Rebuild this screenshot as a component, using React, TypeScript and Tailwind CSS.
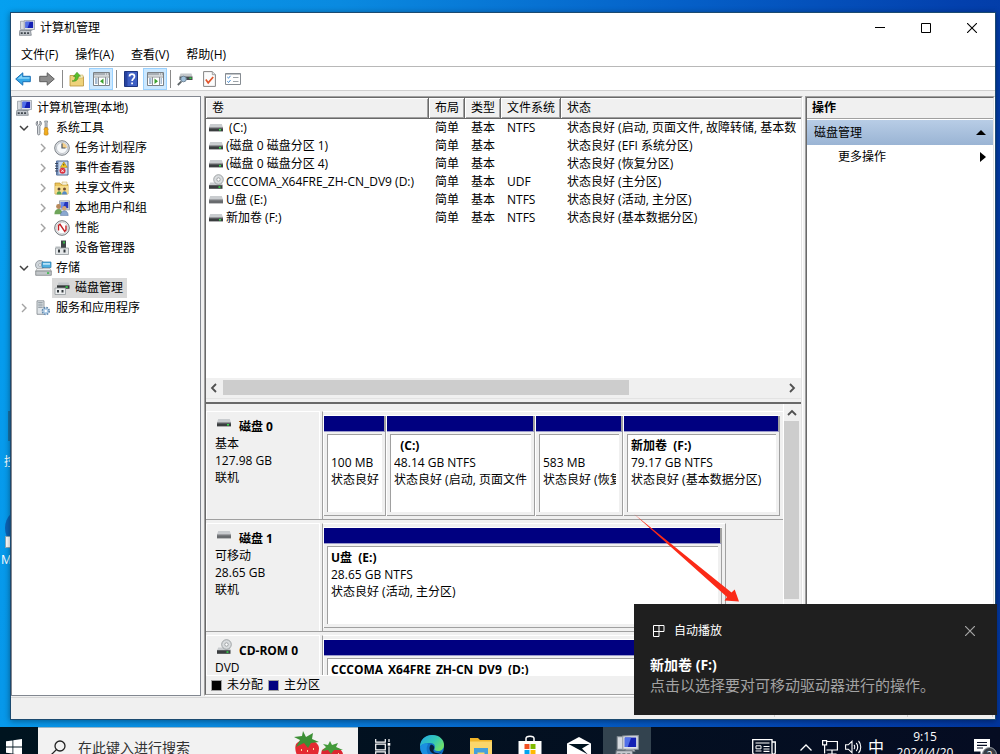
import type { ReactNode } from "react";

type IconProps = { className?: string };

const svgBase = "block shrink-0";

function ComputerIcon({ className = "size-4" }: IconProps) {
  return (
    <svg viewBox="0 0 16 16" className={`${svgBase} ${className}`}>
      <path d="M1.500 1.200h4.200v8.300H1.500z" fill="#d7dbe0" stroke="#8b929a" strokeWidth=".7" />
      <path d="M5.200.600l10.300-.2v9.100H5.200z" fill="#dfe3e8" stroke="#8e959d" strokeWidth=".7" />
      <path d="M6.500 1.700h7.600v6.300H6.500z" fill="#1420b4" />
      <path d="M6.500 1.700h4.300l-2.300 6.300h-2z" fill="#4f6fe8" />
      <path d="M7.500 9.500h5l1.200 1.500H6.500z" fill="#a9afb6" />
      <path d="M.8 10.500h10.700l.8 4.800H.3z" fill="#c4c9cf" stroke="#6f767e" strokeWidth=".7" />
      <path d="M1.700 12.300h2v1.600h-2zM4.900 12.300h2v1.600h-2zM8.100 12.300h2v1.600h-2z" fill="#3d444b" />
    </svg>
  );
}

function DriveIcon({ led = true, className = "" }: { led?: boolean; className?: string }) {
  return (
    <svg viewBox="0 0 14 8" className={`${svgBase} h-2 w-3.5 ${className}`}>
      <path d="M1.200 0h11.600L14 3.600H0z" fill="#c9cccf" />
      <path d="M0 3.500h14V7.400H0z" fill={led ? "#3a3d3f" : "#686b6e"} />
      <path d="M0 3.500h14v.8H0z" fill="#9a9da0" />
      {led && <path d="M10 4.900h2v1.600h-2z" fill="#35e04a" />}
    </svg>
  );
}

function DiscDriveIcon() {
  return (
    <svg viewBox="0 0 15 16" className={`${svgBase} h-4 w-[15px]`}>
      <path d="M1.200 8.500h11.600l1.200 3H0z" fill="#c9cccf" />
      <circle cx="9.500" cy="5.500" r="4.800" fill="#d9dcde" stroke="#8e9396" strokeWidth=".8" />
      <circle cx="9.500" cy="5.500" r="1.700" fill="#fff" stroke="#8e9396" strokeWidth=".8" />
      <path d="M0 11.200h13.500v3.600H0z" fill="#3a3d3f" />
      <path d="M9.500 12.300h2v1.500h-2z" fill="#35e04a" />
    </svg>
  );
}

function ToolsIcon() {
  return (
    <svg viewBox="0 0 16 16" className={`${svgBase} size-4`}>
      <path d="M2.500 1v3.200l1.200 1 1.200-1V1c1.500.7 2 2.800.9 4.300l-.9.9v7.600c0 1.500-2.400 1.500-2.400 0V6.200C.6 5 .8 2 2.500 1z" fill="#d5d9dd" stroke="#6d747b" strokeWidth=".8" />
      <path d="M9.600 1h3l-.5 2.500v4.200h-2V3.500z" fill="#c3c8cd" stroke="#777e85" strokeWidth=".7" />
      <path d="M9.600 7.700h3l.6 2-.5 1 .5 3.600c-.7 1.200-3.500 1.200-4.200 0l.6-3.600-.6-1z" fill="#f2ad1c" stroke="#b27710" strokeWidth=".6" />
    </svg>
  );
}

function ClockIcon() {
  return (
    <svg viewBox="0 0 16 16" className={`${svgBase} size-4`}>
      <circle cx="8" cy="8" r="7.300" fill="#dfe3e7" stroke="#7c8187" />
      <circle cx="8" cy="8" r="5.500" fill="#f7f9fb" stroke="#a7adb3" strokeWidth=".6" />
      <path d="M8 8V2.800A5.200 5.200 0 0 1 13 8z" fill="#f4cf8a" />
      <path d="M8 3.500V8h3.500" fill="none" stroke="#4d555d" strokeWidth="1.200" />
    </svg>
  );
}

function EventIcon() {
  return (
    <svg viewBox="0 0 16 16" className={`${svgBase} size-4`}>
      <path d="M2.500 1h11.500v14H2.500z" fill="#c9d9ee" stroke="#4d6690" />
      <path d="M2.500 1h2v14h-2z" fill="#6d89b5" />
      <path d="M1 3.500h3M1 6h3M1 8.500h3M1 11h3" stroke="#333f55" strokeWidth=".9" />
      <path d="M9.800 2l3.400 5.300H6.500z" fill="#ffd21e" stroke="#a67b00" strokeWidth=".6" />
      <path d="M9.800 3.800v1.800" stroke="#333" />
      <circle cx="8.500" cy="10.800" r="3" fill="#dc3340" />
      <path d="M7.300 9.600l2.400 2.400m0-2.400l-2.400 2.400" stroke="#fff" strokeWidth=".9" />
    </svg>
  );
}

function SharedFolderIcon() {
  return (
    <svg viewBox="0 0 16 16" className={`${svgBase} size-4`}>
      <path d="M1 3h5l1 1.500h7V14H1z" fill="#eac45c" stroke="#b98e27" strokeWidth=".7" />
      <path d="M8 2h5v3H8z" fill="#f5f0dc" stroke="#c6a548" strokeWidth=".5" />
      <path d="M1.200 6h13v7.800H1.200z" fill="#f6dc8c" />
      <circle cx="5" cy="9" r="1.500" fill="#5a4735" />
      <path d="M2.600 14.500c0-4.500 5-4.500 5 0z" fill="#57a054" />
      <circle cx="10.500" cy="9" r="1.500" fill="#745132" />
      <path d="M8 14.500c0-4.500 5-4.500 5 0z" fill="#5389c7" />
    </svg>
  );
}

function UsersIcon() {
  return (
    <svg viewBox="0 0 16 16" className={`${svgBase} size-4`}>
      <path d="M5.500.8h10v9h-10z" fill="#d8dce2" stroke="#888f98" strokeWidth=".7" />
      <path d="M6.800 2h7.500v6.200H6.800z" fill="#2638bd" />
      <path d="M6.800 2h4l-2 6.200h-2z" fill="#6a88e8" />
      <circle cx="4.500" cy="6.500" r="2.400" fill="#b98a5c" />
      <path d="M.4 14.200c0-6.800 8-6.800 8 0z" fill="#6fa55a" />
      <circle cx="10.300" cy="8.300" r="2.200" fill="#d3a878" />
      <path d="M6.500 15.600c0-6.500 7.700-6.500 7.700 0z" fill="#8aa8d0" stroke="#506f9c" strokeWidth=".5" />
    </svg>
  );
}

function PerformanceIcon() {
  return (
    <svg viewBox="0 0 16 16" className={`${svgBase} size-4`}>
      <circle cx="8" cy="8" r="7.300" fill="#f0f1f2" stroke="#6d7277" />
      <circle cx="8" cy="8" r="5.700" fill="#fff" stroke="#b9bdc1" strokeWidth=".6" />
      <path d="M4.500 10.500V5.300l1.500-1 4.700 7 1.300-1.300V5.500" fill="none" stroke="#c22026" strokeWidth="1.400" />
    </svg>
  );
}

function DeviceIcon() {
  return (
    <svg viewBox="0 0 16 16" className={`${svgBase} size-4`}>
      <path d="M7 .5h5V9H7z" fill="#3f4447" />
      <path d="M9 1.500h2v2H9z" fill="#38b54a" />
      <path d="M1.500 8h13v6.500h-13z" fill="#e3e6e8" stroke="#92979b" strokeWidth=".8" />
      <path d="M1.500 6.500h5V8h-5z" fill="#b5babd" />
      <path d="M4 9.500h2v3H4zM9.500 9.500h2v3h-2z" fill="#343a3e" />
    </svg>
  );
}

function StorageIcon() {
  return (
    <svg viewBox="0 0 17 16" className={`${svgBase} h-4 w-[17px]`}>
      <circle cx="5" cy="5" r="4.500" fill="#cfd5da" stroke="#878e95" strokeWidth=".8" />
      <circle cx="5" cy="5" r="1.400" fill="#fff" stroke="#878e95" strokeWidth=".6" />
      <path d="M7 2h9v5.500H7z" fill="#4fb0e0" stroke="#2877a8" strokeWidth=".7" />
      <path d="M8 3h7v1.800H8z" fill="#b7e2f7" />
      <path d="M2 8.500h13l1.300 2.500H.7z" fill="#e9ebed" stroke="#999" strokeWidth=".5" />
      <path d="M.7 11h15.600v4.300H.7z" fill="#c2c6c9" stroke="#73787c" strokeWidth=".7" />
      <path d="M12 12.300h2.200v1.500H12z" fill="#30b843" />
    </svg>
  );
}

function DiskManagementIcon() {
  return (
    <svg viewBox="0 0 16 16" className={`${svgBase} size-4`}>
      <path d="M4.500 2.500h10l1 3h-12z" fill="#c3c7ca" />
      <path d="M3 5.300h12.500v3.500H3z" fill="#34383a" />
      <path d="M11.500 6.300h2.300v1.500h-2.300z" fill="#35e04a" />
      <path d="M1 8h10.500v6.500H1z" fill="#eceeef" stroke="#92979b" strokeWidth=".8" />
      <path d="M3 10h2v2.500H3zM7.500 10h2v2.500h-2z" fill="#343a3e" />
    </svg>
  );
}

function ServicesIcon() {
  return (
    <svg viewBox="0 0 16 16" className={`${svgBase} size-4`}>
      <path d="M2 .8h7v13.500H2z" fill="#dfe4e8" stroke="#7d858c" strokeWidth=".8" />
      <path d="M3.200 2.800h4.500M3.200 5h4.500M3.200 7.200h4.500" stroke="#7e8991" />
      <circle cx="10.800" cy="11" r="3.300" fill="#cfe0f0" stroke="#5e86ad" strokeWidth="1.800" strokeDasharray="1.600 1" />
      <circle cx="10.800" cy="11" r="2.600" fill="#a9c8e4" />
      <circle cx="10.800" cy="11" r="1.200" fill="#fff" />
    </svg>
  );
}

function ArrowIcon({ forward = false }: { forward?: boolean }) {
  return (
    <svg viewBox="0 0 16 14" className={`${svgBase} h-3.5 w-4`}>
      {forward ? (
        <path d="M.7 4.300h7.500V.8L15.300 7l-7.100 6.200V9.700H.7z" fill="#8d8d8d" stroke="#5f5f5f" />
      ) : (
        <>
          <path d="M15.300 4.300H7.800V.8L.7 7l7.100 6.200V9.700h7.500z" fill="#36a8e8" stroke="#1b6fb4" />
          <path d="M14.500 5.300H7V2.700L2.500 6.700h12z" fill="#8ad4f8" />
        </>
      )}
    </svg>
  );
}

function UpFolderIcon() {
  return (
    <svg viewBox="0 0 16 16" className={`${svgBase} size-4`}>
      <path d="M1 4.500h5l1 1.300h7.500V15H1z" fill="#eed27b" stroke="#b8923a" strokeWidth=".8" />
      <path d="M9.500 4h4.500v3H9.500z" fill="#f8efcb" stroke="#c6a548" strokeWidth=".5" />
      <path d="M3 10c2.500 0 3.300-2 3.300-4.500H4.500L8 1.200l3.500 4H9.300c0 3.500-2.200 5.800-6.300 4.800z" fill="#59c12c" stroke="#318213" strokeWidth=".5" />
    </svg>
  );
}

function PaneIcon({ right = false }: { right?: boolean }) {
  return (
    <svg viewBox="0 0 17 14" className={`${svgBase} h-3.5 w-[17px]`}>
      <path d="M.5.500h16v13H.5z" fill="#fff" stroke="#7b8085" />
      <path d="M1 1h15v2.500H1z" fill="#a9afb5" />
      <path d="M12 1.500h1v1h-1zM14 1.500h1v1h-1z" fill="#fff" />
      <path d="M1 5h15" stroke="#8d9296" />
      <path d="M5.500 5v8.500M12.500 5v8.500" stroke="#8d9296" />
      <path d="M2 7h2.500M2 9h2.500M2 11h2.500M13.500 7H15M13.500 9H15M13.500 11H15" stroke="#527aa5" />
      {right ? <path d="M7.500 6.500v5.500l3.500-2.700z" fill="#3aa12e" /> : <path d="M10.500 6.500v5.500L7 9.300z" fill="#3aa12e" />}
    </svg>
  );
}

function HelpIcon() {
  return (
    <svg viewBox="0 0 14 16" className={`${svgBase} h-4 w-3.5`}>
      <path d="M.5.500h13v15H.5z" fill="#3e5fc4" stroke="#1e3580" />
      <path d="M1 1h2.500v14H1z" fill="#2743a0" />
      <path d="M5.500 5.500c0-3.200 5-3.200 5 0 0 2.200-2.400 2-2.400 4.500" fill="none" stroke="#fff" strokeWidth="1.700" />
      <path d="M7.200 11.500H9v1.800H7.200z" fill="#fff" />
    </svg>
  );
}

function ScanDriveIcon() {
  return (
    <svg viewBox="0 0 16 14" className={`${svgBase} h-3.5 w-4`}>
      <path d="M3.500 1.500h11l1 3h-13z" fill="#c4c8cb" />
      <path d="M2.500 4.500h13V8h-13z" fill="#44484a" />
      <path d="M12.500 5.500h2V7h-2z" fill="#30d544" />
      <path d="M4.500 9.300L.8 13" stroke="#5d6468" strokeWidth="1.800" />
      <circle cx="6.500" cy="7" r="2.800" fill="#9fc0da" stroke="#6f8496" />
    </svg>
  );
}

function CheckDocIcon() {
  return (
    <svg viewBox="0 0 13 16" className={`${svgBase} h-4 w-[13px]`}>
      <path d="M.6.600h8.700l3.100 3.100v11.700H.6z" fill="#fcfcfc" stroke="#858585" />
      <path d="M9.300.6v3.100h3.100" fill="#e2e2e2" stroke="#858585" strokeWidth=".7" />
      <path d="M2.800 8.600l2.400 3.200 5-5.800" fill="none" stroke="#e0552b" strokeWidth="1.700" />
    </svg>
  );
}

function ListIcon() {
  return (
    <svg viewBox="0 0 16 12" className={`${svgBase} h-3 w-4`}>
      <path d="M.5.500h15v11H.5z" fill="#fff" stroke="#868c92" />
      <path d="M.5 1h15" stroke="#868c92" />
      <path d="M2.300 4l1.200 1.200 2-2.400M2.300 8.300l1.200 1.200 2-2.400" fill="none" stroke="#3e87d0" />
      <path d="M8 4.500h5.500M8 8.500h5.500" stroke="#9da3a8" />
    </svg>
  );
}

function Chevron({ open = false }: { open?: boolean }) {
  return (
    <svg viewBox="0 0 10 10" className={`${svgBase} size-2.5`}>
      {open ? (
        <path d="M1 3l4 4 4-4" fill="none" stroke="#404040" strokeWidth="1.500" />
      ) : (
        <path d="M3 1l4 4-4 4" fill="none" stroke="#a2a2a2" strokeWidth="1.400" />
      )}
    </svg>
  );
}

function ScrollChevron({ d }: { d: string }) {
  return (
    <svg viewBox="0 0 10 10" className={`${svgBase} size-2.5`}>
      <path d={d} fill="none" stroke="#505050" strokeWidth="1.800" />
    </svg>
  );
}

/* ---------- window chrome ---------- */

function TitleBar() {
  return (
    <header className="flex h-[30px] shrink-0 items-center bg-white pl-2">
      <ComputerIcon />
      <h1 className="ml-[5px] flex-1 text-[12px] leading-4">计算机管理</h1>
      <button aria-label="最小化" className="grid h-full w-[46px] place-items-center">
        <svg viewBox="0 0 10 10" className="size-2.5"><path d="M0 4.500h10" stroke="#000" /></svg>
      </button>
      <button aria-label="最大化" className="grid h-full w-[46px] place-items-center">
        <svg viewBox="0 0 10 10" className="size-2.5"><path d="M.5.500h9v9h-9z" fill="none" stroke="#000" /></svg>
      </button>
      <button aria-label="关闭" className="grid h-full w-[46px] place-items-center">
        <svg viewBox="0 0 10 10" className="size-2.5"><path d="M0 0l10 10M10 0L0 10" stroke="#000" strokeWidth="1.100" /></svg>
      </button>
    </header>
  );
}

function MenuBar() {
  return (
    <nav className="flex h-6 shrink-0 items-center gap-px border-b border-[#b8b8b8] bg-white pl-0.5">
      {["文件(F)", "操作(A)", "查看(V)", "帮助(H)"].map((label) => (
        <button key={label} className="px-2 leading-5">{label}</button>
      ))}
    </nav>
  );
}

function ToolButton({ label, active = false, children }: { label: string; active?: boolean; children: ReactNode }) {
  return (
    <button
      aria-label={label}
      className={
        active
          ? "grid h-[22px] w-6 place-items-center border border-[#99d1ff] bg-[#cce8ff]"
          : "grid h-[22px] w-6 place-items-center"
      }
    >
      {children}
    </button>
  );
}

function Separator() {
  return <span className="mr-0.5 ml-[3px] h-[18px] w-px bg-[#8a8a8a]" />;
}

function ToolBar() {
  return (
    <div className="flex h-[24px] shrink-0 items-center border-b border-[#d0d0d0] bg-white pt-px">
      <ToolButton label="后退"><ArrowIcon /></ToolButton>
      <ToolButton label="前进"><ArrowIcon forward /></ToolButton>
      <Separator />
      <ToolButton label="上一级"><UpFolderIcon /></ToolButton>
      <ToolButton label="显示/隐藏控制台树" active><PaneIcon /></ToolButton>
      <Separator />
      <ToolButton label="帮助"><HelpIcon /></ToolButton>
      <ToolButton label="显示/隐藏操作窗格" active><PaneIcon right /></ToolButton>
      <Separator />
      <ToolButton label="重新扫描磁盘"><ScanDriveIcon /></ToolButton>
      <ToolButton label="检查"><CheckDocIcon /></ToolButton>
      <ToolButton label="列表"><ListIcon /></ToolButton>
    </div>
  );
}

/* ---------- console tree ---------- */

type Node = { label: string; icon: ReactNode; level: 1 | 2; open?: boolean; leaf?: boolean; selected?: boolean };

const nodes: Node[] = [
  { label: "系统工具", icon: <ToolsIcon />, level: 1, open: true },
  { label: "任务计划程序", icon: <ClockIcon />, level: 2 },
  { label: "事件查看器", icon: <EventIcon />, level: 2 },
  { label: "共享文件夹", icon: <SharedFolderIcon />, level: 2 },
  { label: "本地用户和组", icon: <UsersIcon />, level: 2 },
  { label: "性能", icon: <PerformanceIcon />, level: 2 },
  { label: "设备管理器", icon: <DeviceIcon />, level: 2, leaf: true },
  { label: "存储", icon: <StorageIcon />, level: 1, open: true },
  { label: "磁盘管理", icon: <DiskManagementIcon />, level: 2, leaf: true, selected: true },
  { label: "服务和应用程序", icon: <ServicesIcon />, level: 1 },
];

function ConsoleTree() {
  return (
    <aside className="w-[190px] shrink-0 border border-[#828790] bg-white pt-px">
      <ul>
        <li className="flex h-5 items-center gap-[5px] pl-1">
          <ComputerIcon />
          <span>计算机管理(本地)</span>
        </li>
        {nodes.map((n) => (
          <li key={n.label} className={n.level === 1 ? "flex h-5 items-center pl-[7px]" : "flex h-5 items-center pl-[26px]"}>
            <span className="flex w-[14px] shrink-0">{!n.leaf && <Chevron open={n.open} />}</span>
            <span className={n.selected ? "flex h-5 items-center gap-[5px] bg-[#d9d9d9] pr-1 pl-0.5" : "flex h-5 items-center gap-[5px] pl-0.5"}>
              <span className="flex w-4 justify-center">{n.icon}</span>
              <span className="leading-5">{n.label}</span>
            </span>
          </li>
        ))}
      </ul>
    </aside>
  );
}

/* ---------- volume list ---------- */

type Volume = { name: string; kind: "disk" | "disc" | "usb"; fs: string; status: string };

const volumes: Volume[] = [
  { name: "\u00a0(C:)", kind: "disk", fs: "NTFS", status: "状态良好 (启动, 页面文件, 故障转储, 基本数" },
  { name: "(磁盘 0 磁盘分区 1)", kind: "disk", fs: "", status: "状态良好 (EFI 系统分区)" },
  { name: "(磁盘 0 磁盘分区 4)", kind: "disk", fs: "", status: "状态良好 (恢复分区)" },
  { name: "CCCOMA_X64FRE_ZH-CN_DV9 (D:)", kind: "disc", fs: "UDF", status: "状态良好 (主分区)" },
  { name: "U盘 (E:)", kind: "usb", fs: "NTFS", status: "状态良好 (活动, 主分区)" },
  { name: "新加卷 (F:)", kind: "disk", fs: "NTFS", status: "状态良好 (基本数据分区)" },
];

function VolumeIcon({ kind }: { kind: Volume["kind"] }) {
  if (kind === "disc") return <DiscDriveIcon />;
  return <DriveIcon led={kind === "disk"} />;
}

function VolumeList() {
  return (
    <section className="flex h-[300px] shrink-0 flex-col overflow-hidden bg-white">
      <div className="min-h-0 flex-1 overflow-hidden">
        <table className="w-full table-fixed border-separate border-spacing-0 text-left whitespace-nowrap">
          <colgroup>
            <col className="w-[223px]" />
            <col className="w-9" />
            <col className="w-9" />
            <col className="w-[60px]" />
            <col />
          </colgroup>
          <thead>
            <tr>
              {["卷", "布局", "类型", "文件系统", "状态"].map((h, i) => (
                <th
                  key={h}
                  className={
                    i < 4
                      ? "h-[21px] border-r border-b border-[#696969] bg-[#f0f0f0] p-0 pl-1.5 font-normal shadow-[inset_1px_1px_0_#fff,inset_-1px_-1px_0_#a0a0a0]"
                      : "h-[21px] border-b border-[#696969] bg-[#f0f0f0] p-0 pl-1.5 font-normal shadow-[inset_1px_1px_0_#fff,inset_0_-1px_0_#a0a0a0]"
                  }
                >
                  {h}
                </th>
              ))}
            </tr>
          </thead>
          <tbody>
            {volumes.map((v) => (
              <tr key={v.name} className="leading-[18px]">
                <td className="p-0">
                  <span className="flex h-[18px] items-center pl-[3px]">
                    <span className="flex w-[17px]"><VolumeIcon kind={v.kind} /></span>
                    {v.name}
                  </span>
                </td>
                <td className="p-0 pl-1.5">简单</td>
                <td className="p-0 pl-1.5">基本</td>
                <td className="p-0 pl-1.5">{v.fs}</td>
                <td className="overflow-hidden p-0 pl-1.5">{v.status}</td>
              </tr>
            ))}
          </tbody>
        </table>
      </div>
      <div className="flex h-5 shrink-0 items-center bg-[#f0f0f0] pr-1 pb-px pl-[3px]">
        <ScrollChevron d="M7 1L3 5l4 4" />
        <div className="ml-1 flex flex-1">
          <span className="h-[15px] w-[72%] bg-[#cdcdcd]" />
        </div>
        <ScrollChevron d="M3 1l4 4-4 4" />
      </div>
    </section>
  );
}

/* ---------- graphical disk view ---------- */

function Partition({ name, lines }: { name: string; lines: string[] }) {
  return (
    <div className="flex h-[101px] min-w-0 flex-col border-t border-l border-white">
      <div className="h-4 shrink-0 border-r-2 border-b border-r-[#a0a0a0] border-b-[#9a9acc] bg-[#000080]" />
      <div className="flex-1 border-r border-b border-[#a0a0a0] pt-0.5 pr-[3px] pb-[3px] pl-[3px]">
        <div className="h-full overflow-hidden border-t border-l border-[#a0a0a0] bg-white pt-0.5 pr-[3px] pl-[3px]">
          <div className="overflow-hidden leading-[17px] whitespace-pre">
            <p className="h-[17px] font-bold">{name}</p>
            {lines.map((l) => (
              <p key={l}>{l}</p>
            ))}
          </div>
        </div>
      </div>
    </div>
  );
}

function DiskLabel({ icon, title, lines }: { icon: ReactNode; title: string; lines: string[] }) {
  return (
    <div className="mr-[2px] w-[114px] shrink-0 border border-b-0 border-white pt-1.5 pl-2 leading-[17px]">
      <div className="flex h-[17px]">
        <span className="ml-0.5 flex h-4 w-[22px] items-center pb-1.5">{icon}</span>
        <strong className="whitespace-nowrap">{title}</strong>
      </div>
      {lines.map((l) => (
        <p key={l}>{l}</p>
      ))}
    </div>
  );
}

function DiskRow({ label, children }: { label: ReactNode; children: ReactNode }) {
  return (
    <div className="mb-[3px] flex h-[109px] shrink-0 border-b border-[#a0a0a0]">
      {label}
      {children}
    </div>
  );
}

function DiskView() {
  return (
    <section className="flex min-h-0 flex-1 bg-[#f0f0f0]">
      <div className="flex min-w-0 flex-1 flex-col overflow-hidden pt-[7px]">
        <DiskRow label={<DiskLabel icon={<DriveIcon />} title="磁盘 0" lines={["基本", "127.98 GB", "联机"]} />}>
          <div className="grid flex-1 grid-cols-[63fr_149fr_88fr_157fr] content-start border-t border-l border-t-white border-l-[#a0a0a0] pt-[3px] pr-[3px]">
            <Partition name="" lines={["100 MB", "状态良好"]} />
            <Partition name="  (C:)" lines={["48.14 GB NTFS", "状态良好 (启动, 页面文件"]} />
            <Partition name="" lines={["583 MB", "状态良好 (恢复"]} />
            <Partition name="新加卷  (F:)" lines={["79.17 GB NTFS", "状态良好 (基本数据分区)"]} />
          </div>
        </DiskRow>
        <DiskRow label={<DiskLabel icon={<DriveIcon led={false} />} title="磁盘 1" lines={["可移动", "28.65 GB", "联机"]} />}>
          <div className="grid w-[404px] content-start border-x border-t border-x-[#a0a0a0] border-t-white pt-[3px] pr-[3px]">
            <Partition name="U盘  (E:)" lines={["28.65 GB NTFS", "状态良好 (活动, 主分区)"]} />
          </div>
        </DiskRow>
        <DiskRow label={<DiskLabel icon={<DiscDriveIcon />} title="CD-ROM 0" lines={["DVD"]} />}>
          <div className="grid w-[404px] content-start border-x border-t border-x-[#a0a0a0] border-t-white pt-[3px] pr-[3px]">
            <Partition name="CCCOMA_X64FRE_ZH-CN_DV9  (D:)" lines={[]} />
          </div>
        </DiskRow>
      </div>
      <div className="flex w-[18px] shrink-0 flex-col items-center border-l border-white pr-0.5">
        <span className="grid h-[17px] shrink-0 place-items-center"><ScrollChevron d="M1 7l4-4 4 4" /></span>
        <span className="h-[178px] w-[15px] bg-[#cdcdcd]" />
      </div>
    </section>
  );
}

function Legend() {
  return (
    <div className="flex h-[19px] shrink-0 items-center border-t border-white bg-[#f0f0f0] pl-[5px]">
      <span className="size-[11px] border border-[#a0a0a0] bg-black" />
      <span className="mr-[5px] ml-[5px]">未分配</span>
      <span className="size-[11px] border border-[#a0a0a0] bg-[#000080]" />
      <span className="ml-[5px]">主分区</span>
    </div>
  );
}

const sunkenOuter = "border border-t-[#a0a0a0] border-r-white border-b-white border-l-[#a0a0a0]";
const sunkenInner = "border border-t-[#696969] border-r-[#e3e3e3] border-b-[#a0a0a0] border-l-[#696969]";

function DiskManagement() {
  return (
    <main className={`flex min-w-0 flex-1 ${sunkenOuter}`}>
      <div className={`flex min-w-0 flex-1 flex-col ${sunkenInner}`}>
        <VolumeList />
        <div className="h-1.5 shrink-0 border-t border-b-2 border-t-[#e3e3e3] border-b-[#696969] bg-[#f0f0f0]" />
        <DiskView />
        <Legend />
      </div>
    </main>
  );
}

function ActionsPane() {
  return (
    <aside className={`flex w-[190px] shrink-0 ${sunkenOuter}`}>
      <div className={`flex flex-1 flex-col bg-white ${sunkenInner}`}>
        <h2 className="mb-px h-[21px] border-b border-[#a0a0a0] bg-[#f0f0f0] pl-[5px] leading-5 font-bold">操作</h2>
        <button className="flex h-[25px] items-center justify-between bg-linear-to-b from-[#b8cde6] to-[#9ab4d4] pr-[7px] pl-[7px]">
          磁盘管理
          <svg viewBox="0 0 10 5" className="h-[5px] w-2.5"><path d="M5 0l5 5H0z" /></svg>
        </button>
        <button className="flex h-[23px] items-center justify-between pr-[7px] pl-[31px]">
          更多操作
          <svg viewBox="0 0 6 10" className="h-2.5 w-1.5"><path d="M0 0l6 5-6 5z" /></svg>
        </button>
      </div>
    </aside>
  );
}

function StatusBar() {
  return (
    <footer className="flex h-[22px] shrink-0 border-t border-[#d7d7d7] bg-[#f0f0f0] py-0.5">
      <span className="flex-1 border-r border-[#d0d0d0]" />
      <span className="w-[133px] border-r border-[#d0d0d0]" />
      <span className="mr-0.5 w-[85px] border-r border-[#d0d0d0]" />
    </footer>
  );
}

/* ---------- overlays ---------- */

function PointerArrow() {
  return (
    <svg viewBox="0 0 106 90" className="absolute right-[260px] bottom-[150px] h-[90px] w-[106px]">
      <path d="M0 0L97.500 78.500 100.700 75.500 105 87.500 90.500 86.500 93 83z" fill="#fb2a17" />
    </svg>
  );
}

function Toast() {
  return (
    <div role="alert" className="absolute right-[3px] bottom-[39px] h-[111px] w-[363px] bg-[#1f1f1f] px-4 pt-[17px] text-white">
      <div className="flex h-5 items-center">
        <svg viewBox="0 0 12 12" className="ml-[3px] size-3">
          <path d="M.5.500h10.500v6H6v5H.5zM6 .5v6M.5 6.500H6" fill="none" stroke="#fff" />
        </svg>
        <span className="ml-[9px] flex-1">自动播放</span>
        <button aria-label="关闭通知" className="mr-[6px]">
          <svg viewBox="0 0 10 10" className="size-2.5"><path d="M0 0l10 10M10 0L0 10" stroke="#a6a6a6" strokeWidth="1.200" /></svg>
        </button>
      </div>
      <p className="mt-[14px] text-[14px] leading-5 font-bold">新加卷 (F:)</p>
      <p className="text-[15px] leading-5 text-[#a3a3a3]">点击以选择要对可移动驱动器进行的操作。</p>
    </div>
  );
}

/* ---------- taskbar ---------- */

function Strawberries() {
  return (
    <svg viewBox="0 0 52 36" className="h-9 w-[52px] shrink-0">
      <path d="M2 14c6-7 22-5 23 4 0 8-5 14-11 18C6 33-1 22 2 14z" fill="#e42a31" />
      <path d="M28 20c5-5 20-4 21 4 0 6-3 10-7 12H32c-4-4-6-11-4-16z" fill="#dc2530" />
      <path d="M9 1l3 6 7-4-1 6 7 3-8 1-3 5-4-5-8 4 4-7-6-3 8-1z" fill="#3c8f35" />
      <path d="M36 11l2 4 6-2-2 4 7 3-9 0-3 4-3-4-6 1 4-4-3-3 5 1z" fill="#439a3a" />
      <path d="M7 19h1v2H7zM13 20h1v2h-1zM19 18h1v2h-1zM10 25h1v2h-1zM16 25h1v2h-1zM34 26h1v2h-1zM40 26h1v2h-1zM44 23h1v2h-1z" fill="#ffd7a0" />
    </svg>
  );
}

function TaskButton({ label, active = false, children }: { label: string; active?: boolean; children: ReactNode }) {
  return (
    <button aria-label={label} className={active ? "grid h-full w-12 place-items-center bg-[#33434f]" : "grid h-full w-[49px] place-items-center"}>
      {children}
    </button>
  );
}

function Taskbar() {
  return (
    <footer className="-mb-[13px] flex h-10 shrink-0 items-center bg-linear-to-r from-[#00141f] to-[#050c22] text-white">
      <button aria-label="开始" className="grid h-full w-[38px] place-items-center pr-2.5">
        <svg viewBox="0 0 16 16" className="size-4">
          <path d="M0 2.300L6.500 1.400v6.200H0zM7.300 1.300L16 0v7.600H7.300zM0 8.400h6.500v6.200L0 13.700zM7.300 8.400H16V16l-8.700-1.300z" fill="#fff" />
        </svg>
      </button>
      <label className="flex h-full w-[320px] shrink-0 items-center overflow-hidden border-t border-[#9ab8c8] bg-[#f2f2f2] pl-3">
        <svg viewBox="0 0 16 16" className="size-4 shrink-0">
          <circle cx="10" cy="6" r="5" fill="none" stroke="#222" strokeWidth="1.300" />
          <path d="M6.400 9.600L.6 15.400" stroke="#222" strokeWidth="1.300" />
        </svg>
        <input
          aria-label="搜索"
          placeholder="在此键入进行搜索"
          className="ml-3 h-6 w-[200px] bg-transparent text-[14px] text-[#333] outline-none placeholder:text-[#333]"
        />
        <span className="ml-4"><Strawberries /></span>
      </label>
      <TaskButton label="任务视图">
        <svg viewBox="0 0 16 16" className="size-4">
          <path d="M.7 0v3.200h9.600V0M.7 16v-3.200h9.600V16M.7 5.200h9.600v5.600H.7zM14 0v3M14 7.500V16" fill="none" stroke="#fff" strokeWidth="1.200" />
          <path d="M12.700 4h2.600v2.700h-2.600z" fill="#fff" />
        </svg>
      </TaskButton>
      <TaskButton label="Microsoft Edge">
        <svg viewBox="0 0 24 24" className="size-6">
          <defs>
            <linearGradient id="edge-top" x1="0" y1="0" x2="1" y2=".6">
              <stop offset="0" stopColor="#22a6e6" />
              <stop offset=".6" stopColor="#35c9b5" />
              <stop offset="1" stopColor="#6fe06a" />
            </linearGradient>
          </defs>
          <circle cx="12" cy="12" r="12" fill="#1272c8" />
          <path d="M0 12C0 4 6 0 12 0c8 0 12 5 12 10 0 4-3 6-6 6-3 0-4-1-3.500-2.500 1-1.500.5-5.500-3.800-5.500C6 8 1 9 0 12z" fill="url(#edge-top)" />
          <path d="M8 9.500c-3 4-1 12 6 13.500C6 25 0 18 .2 12 2 8 7 7.500 8 9.500z" fill="#1b8fe0" />
          <path d="M11 9.500c-3 3-1.500 9 4.500 9.500 3 .2 5-1 6.500-2.500-1 1-3 1.700-5 1.500-3-.3-4.500-2-3-4 .8-1.300 0-4-3-4.500z" fill="#07203c" />
        </svg>
      </TaskButton>
      <TaskButton label="文件资源管理器">
        <svg viewBox="0 0 22 20" className="h-5 w-[22px]">
          <path d="M0 1h8l2 2h12v17H0z" fill="#f0b429" />
          <path d="M0 4.500h22V20H0z" fill="#fbd66b" />
          <path d="M4 11h14v9h-3.500v-4.500h-7V20H4z" fill="#459fdb" />
        </svg>
      </TaskButton>
      <TaskButton label="Microsoft Store">
        <svg viewBox="0 0 24 24" className="size-6">
          <path d="M8 6V3.500C8 .5 16 .5 16 3.500V6" fill="none" stroke="#fff" strokeWidth="1.500" />
          <path d="M.5 6h23v18H.5z" fill="#fff" />
          <path d="M6.500 9h5v5h-5z" fill="#f25022" />
          <path d="M12.500 9h5v5h-5z" fill="#7fba00" />
          <path d="M6.500 15h5v5h-5z" fill="#00a4ef" />
          <path d="M12.500 15h5v5h-5z" fill="#ffb900" />
        </svg>
      </TaskButton>
      <TaskButton label="邮件">
        <svg viewBox="0 0 24 20" className="h-5 w-6">
          <path d="M0 6.500L12 0l12 6.500V20H0z" fill="#fff" />
          <path d="M1.500 7h21L15 11.500l6 6z" fill="#00131f" />
        </svg>
      </TaskButton>
      <TaskButton label="计算机管理" active><ComputerIcon className="size-6" /></TaskButton>
      <div className="flex h-full flex-1 items-center justify-end pr-[7px]">
        <svg viewBox="0 0 24 16" className="mr-6 h-4 w-6">
          <path d="M20 3h3.300v10.500c0 1.500-1 1.800-2 1.800H2.500c-1.500 0-1.800-1-1.800-2V.7H20v12.500c0 1.200.6 2 1.500 2" fill="none" stroke="#fff" strokeWidth="1.300" />
          <path d="M3.500 4h14M3.500 12h6M11.500 7.500h6M11.500 10h6M11.500 12.300h6" stroke="#fff" strokeWidth="1.200" />
          <path d="M4 6.800h5v3H4z" fill="none" stroke="#fff" />
        </svg>
        <svg viewBox="0 0 12 7" className="mr-2.5 h-[7px] w-3"><path d="M.5 6.500L6 1l5.500 5.500" fill="none" stroke="#fff" strokeWidth="1.300" /></svg>
        <svg viewBox="0 0 16 15" className="mr-[7px] h-[15px] w-4">
          <path d="M5 1.500h10.400v8.500H4.500M.6.600h4v4.200h-4zM2.600 4.800v8.600M10 10v4M5.500 14h9" fill="none" stroke="#fff" strokeWidth="1.200" />
        </svg>
        <svg viewBox="0 0 17 14" className="mr-1.5 h-3.5 w-[17px]">
          <path d="M.6 4.800h2.700L7 1.300v11.400L3.300 9.200H.6zM9 5c1 1 1 3 0 4M11.200 3c2 2 2 6 0 8M13.500 1c3 3.200 3 8.800 0 12" fill="none" stroke="#fff" strokeWidth="1.100" />
        </svg>
        <span className="mr-2.5 text-[16px] leading-6">中</span>
        <time className="mr-[18px] flex h-full w-[62px] flex-col items-center pt-0.5 text-[12px] leading-4">
          <span>9:15</span>
          <span>2024/4/20</span>
        </time>
        <span className="relative mr-[3px]">
          <svg viewBox="0 0 16 16" className="size-4">
            <path d="M0 0h16v12.500h-6L6.500 16v-3.500H0z" fill="#fff" />
            <path d="M3 3.500h10M3 6.300h10M3 9h6" stroke="#091027" strokeWidth="1.200" />
          </svg>
          <span className="absolute top-2 left-2 grid size-[15px] place-items-center rounded-full border border-[#9aa0a8] bg-[#3a3f47] text-[10px] leading-3">2</span>
        </span>
      </div>
    </footer>
  );
}

/* ---------- desktop ---------- */

function DesktopIcons() {
  return (
    <div className="absolute top-0 left-0 h-full w-[11px] overflow-hidden text-[12px] whitespace-nowrap text-white">
      <span className="absolute top-[411px] left-2 h-[30px] w-10 bg-[#1873a8]" />
      <span className="absolute top-[454px] left-1">控</span>
      <span className="absolute top-[508px] left-[5px] size-10 rounded-full bg-[#0b63b5]" />
      <span className="absolute top-[536px] left-[5px] size-3 border border-[#8ab] bg-white" />
      <span className="absolute top-[552px] left-px">M</span>
    </div>
  );
}

export default function App() {
  return (
    <div className="relative flex h-screen flex-col overflow-hidden bg-[linear-gradient(100deg,#05a0f0_0%,#0a8ae0_30%,#0560c8_60%,#0340ad_85%,#02359c_100%)] font-['Open_Sans','Noto_Sans_CJK_SC',sans-serif] text-[12px] leading-4 text-black">
      <DesktopIcons />
      <div className="relative flex min-h-0 flex-1 pt-3 pr-1 pb-[7px] pl-2.5">
        <div className="flex min-w-0 flex-1 flex-col border border-[#1b4a70] bg-[#f0f0f0] shadow-[0_1px_6px_rgba(0,0,0,0.4)]">
          <TitleBar />
          <MenuBar />
          <ToolBar />
          <div className="flex min-h-0 flex-1 pt-[5px] pb-px">
            <ConsoleTree />
            <div className="ml-[3px] flex min-w-0 flex-1 gap-0.5">
              <DiskManagement />
              <ActionsPane />
            </div>
          </div>
          <StatusBar />
        </div>
      </div>
      <Taskbar />
      <PointerArrow />
      <Toast />
    </div>
  );
}
